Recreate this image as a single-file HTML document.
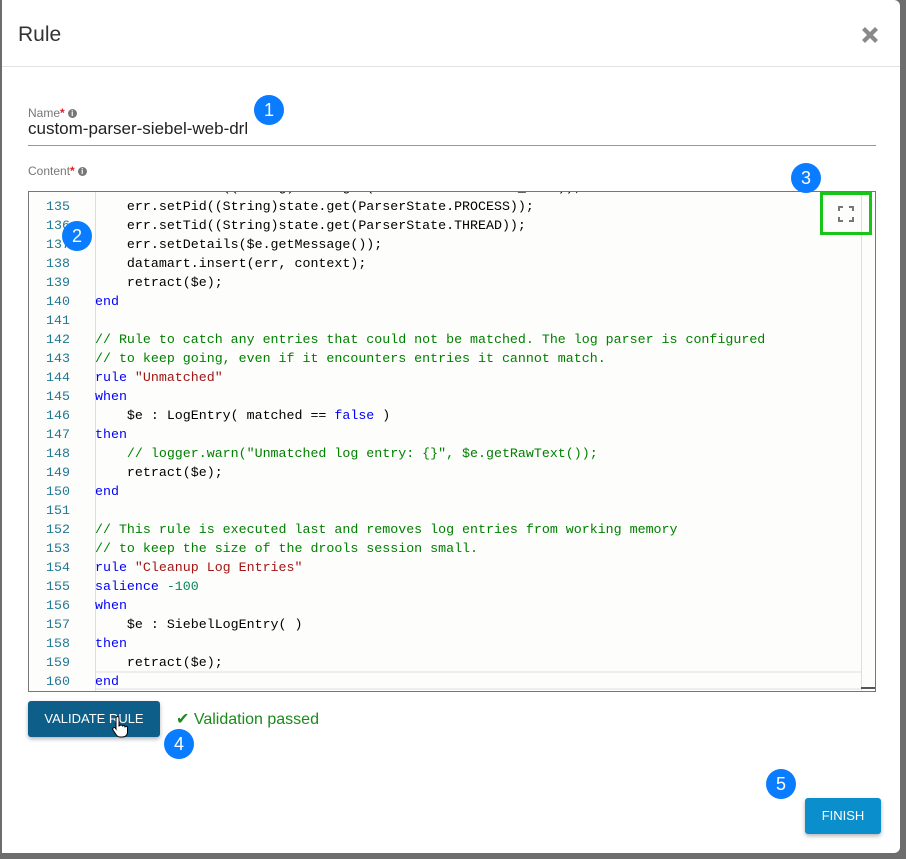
<!DOCTYPE html>
<html><head><meta charset="utf-8"><style>
*{box-sizing:border-box;margin:0;padding:0}
body{width:906px;height:859px;background:#6d6d6d;position:relative;overflow:hidden;font-family:"Liberation Sans",sans-serif}
.modal{position:absolute;left:2px;top:0;width:898px;height:853px;background:#fff;border-radius:0 6px 6px 0}
.hdr{position:absolute;left:0;top:0;width:100%;height:67px;border-bottom:1px solid #e2e2e2}
.title{position:absolute;left:16px;top:23px;font-size:21px;color:#333}
.close{position:absolute;left:859px;top:26px}
.lbl{position:absolute;font-size:12px;color:#777}
.lbl b{color:#e02020;font-weight:bold}
.info{display:inline-block;width:9px;height:9px;border-radius:50%;background:#777;color:#fff;font-size:8px;line-height:9px;text-align:center;font-weight:bold;vertical-align:1px;margin-left:3px}
.name{position:absolute;left:26px;top:119px;font-size:17px;color:#222}
.uline{position:absolute;left:26px;top:145px;width:848px;height:1px;background:#999}
.ed{position:absolute;left:26px;top:191px;width:848px;height:501px;border:1px solid #777;background:#fdfdfb;overflow:hidden}
.gut{position:absolute;left:0;top:0;width:67px;height:100%;border-right:1px solid #ddd;background:#fdfdfb}
.code{position:absolute;left:0;top:-14px;font-family:"Liberation Mono",monospace;font-size:13.3px;line-height:19px;white-space:pre}
.ln{position:absolute;left:0;width:41px;text-align:right;color:#237893}
.tx{position:absolute;left:66px;color:#000}
.k{color:#0000ff}.s{color:#a31515}.c{color:#008000}.n{color:#098658}
.vs{position:absolute;left:832px;top:0;width:1px;height:100%;background:#ddd}
.act{position:absolute;left:67px;top:479px;width:765px;height:19px;border-top:2px solid #eee;border-bottom:2px solid #eee}
.badge{position:absolute;width:30px;height:30px;border-radius:50%;background:#0a7cff;color:#fff;font-size:18px;text-align:center;line-height:30px}
.btn{position:absolute;color:#fff;font-size:13px;text-align:center;border-radius:3px;box-shadow:0 2px 4px rgba(0,0,0,.3)}
</style></head><body>
<div class="modal">
<div class="hdr"><div class="title">Rule</div>
<svg class="close" width="18" height="18" viewBox="0 0 18 18"><path d="M2.5 2.5L15.5 15.5M15.5 2.5L2.5 15.5" stroke="#8a8a8a" stroke-width="4.2"/></svg></div>
<div class="lbl" style="left:26px;top:106px">Name<b>*</b><span class="info">i</span></div>
<div class="name">custom-parser-siebel-web-drl</div>
<div class="uline"></div>
<div class="lbl" style="left:26px;top:164px">Content<b>*</b><span class="info">i</span></div>
<div class="ed">
<div class="gut"></div>
<div class="act"></div>
<div class="code">
<div class="tx" style="top:0">    err.setTname((String)state.get(ParserState.THREAD_NAME));</div>
<div class="ln" style="top:19px">135</div><div class="tx" style="top:19px">    err.setPid((String)state.get(ParserState.PROCESS));</div>
<div class="ln" style="top:38px">136</div><div class="tx" style="top:38px">    err.setTid((String)state.get(ParserState.THREAD));</div>
<div class="ln" style="top:57px">137</div><div class="tx" style="top:57px">    err.setDetails($e.getMessage());</div>
<div class="ln" style="top:76px">138</div><div class="tx" style="top:76px">    datamart.insert(err, context);</div>
<div class="ln" style="top:95px">139</div><div class="tx" style="top:95px">    retract($e);</div>
<div class="ln" style="top:114px">140</div><div class="tx k" style="top:114px">end</div>
<div class="ln" style="top:133px">141</div>
<div class="ln" style="top:152px">142</div><div class="tx c" style="top:152px">// Rule to catch any entries that could not be matched. The log parser is configured</div>
<div class="ln" style="top:171px">143</div><div class="tx c" style="top:171px">// to keep going, even if it encounters entries it cannot match.</div>
<div class="ln" style="top:190px">144</div><div class="tx" style="top:190px"><span class="k">rule</span> <span class="s">"Unmatched"</span></div>
<div class="ln" style="top:209px">145</div><div class="tx k" style="top:209px">when</div>
<div class="ln" style="top:228px">146</div><div class="tx" style="top:228px">    $e : LogEntry( matched == <span class="k">false</span> )</div>
<div class="ln" style="top:247px">147</div><div class="tx k" style="top:247px">then</div>
<div class="ln" style="top:266px">148</div><div class="tx c" style="top:266px">    // logger.warn("Unmatched log entry: {}", $e.getRawText());</div>
<div class="ln" style="top:285px">149</div><div class="tx" style="top:285px">    retract($e);</div>
<div class="ln" style="top:304px">150</div><div class="tx k" style="top:304px">end</div>
<div class="ln" style="top:323px">151</div>
<div class="ln" style="top:342px">152</div><div class="tx c" style="top:342px">// This rule is executed last and removes log entries from working memory</div>
<div class="ln" style="top:361px">153</div><div class="tx c" style="top:361px">// to keep the size of the drools session small.</div>
<div class="ln" style="top:380px">154</div><div class="tx" style="top:380px"><span class="k">rule</span> <span class="s">"Cleanup Log Entries"</span></div>
<div class="ln" style="top:399px">155</div><div class="tx" style="top:399px"><span class="k">salience</span> <span class="n">-100</span></div>
<div class="ln" style="top:418px">156</div><div class="tx k" style="top:418px">when</div>
<div class="ln" style="top:437px">157</div><div class="tx" style="top:437px">    $e : SiebelLogEntry( )</div>
<div class="ln" style="top:456px">158</div><div class="tx k" style="top:456px">then</div>
<div class="ln" style="top:475px">159</div><div class="tx" style="top:475px">    retract($e);</div>
<div class="ln" style="top:494px">160</div><div class="tx k" style="top:494px">end</div>
</div>
<div class="vs"></div>
<div style="position:absolute;left:832px;top:495px;width:14px;height:2px;background:#555"></div>
</div>
<div style="position:absolute;left:818px;top:192px;width:52px;height:43px;border:3px solid #18c418"></div>
<svg style="position:absolute;left:836px;top:206px" width="16" height="16" viewBox="0 0 16 16"><path d="M1 5V1H5M11 1H15V5M15 11V15H11M5 15H1V11" fill="none" stroke="#777" stroke-width="2"/></svg>
<div class="btn" style="left:26px;top:701px;width:132px;height:36px;line-height:36px;background:#0d5f89">VALIDATE RULE</div>
<svg style="position:absolute;left:110px;top:716px" width="16" height="22" viewBox="0 0 16 22"><path d="M4 2a1.5 1.5 0 013 0v8l1-.5a1.5 1.5 0 012.5.5 1.5 1.5 0 012.5.8 1.4 1.4 0 012.5 1V16c0 3-2 5-5 5H8c-2 0-3-1-4-2.5L1 14a1.5 1.5 0 012.5-1.8L4 13z" fill="#fff" stroke="#000" stroke-width="1"/></svg>
<div style="position:absolute;left:174px;top:709px;color:#1a8a1a;font-size:16px">✔ Validation passed</div>
<div class="btn" style="left:803px;top:798px;width:76px;height:36px;line-height:36px;background:#0b8fcc">FINISH</div>
<div class="badge" style="left:252px;top:95px">1</div>
<div class="badge" style="left:60px;top:221px">2</div>
<div class="badge" style="left:789px;top:163px">3</div>
<div class="badge" style="left:162px;top:729px">4</div>
<div class="badge" style="left:764px;top:769px">5</div>
</div>
</body></html>
